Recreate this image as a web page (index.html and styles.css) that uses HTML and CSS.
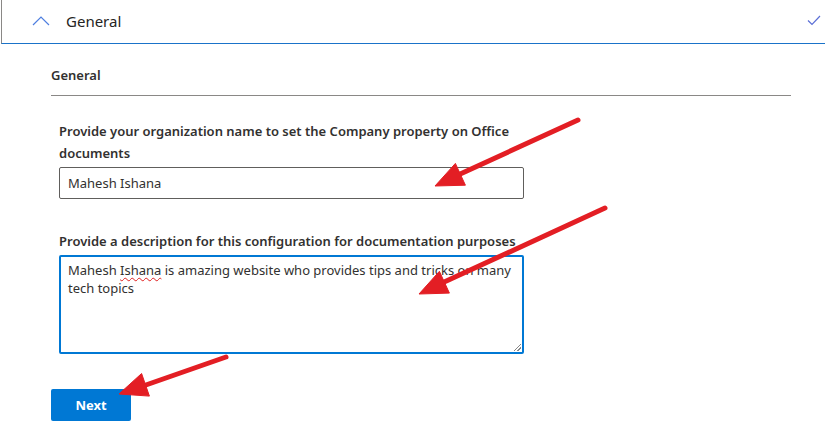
FILE: index.html
```html
<!DOCTYPE html>
<html lang="en">
<head>
<meta charset="utf-8">
<title>General</title>
<link rel="stylesheet" href="styles.css">
</head>
<body>
<div class="page">
  <div class="header">
    <svg class="chevron" width="18" height="10" viewBox="0 0 18 10"><polyline points="1,9 9,1 17,9" fill="none" stroke="#4f7fe0" stroke-width="1.2"/></svg>
    <span class="header-title">General</span>
    <svg class="check" width="14" height="11" viewBox="0 0 14 11"><polyline points="1,5.5 5,9.5 13,1" fill="none" stroke="#5b6fd6" stroke-width="1.2"/></svg>
  </div>
  <div class="content">
    <div class="section-title">General</div>
    <div class="divider"></div>
    <div class="form">
      <div class="field">
        <label class="label">Provide your organization name to set the Company property on Office documents</label>
        <div class="input">Mahesh Ishana</div>
      </div>
      <div class="field field-desc">
        <label class="label">Provide a description for this configuration for documentation purposes</label>
        <div class="textarea"><div class="line">Mahesh <span class="misspelled">Ishana</span> is amazing website who provides tips and tricks on many</div><div class="line">tech topics</div><span class="grip"></span></div>
      </div>
    </div>
    <button class="next">Next</button>
  </div>
  <svg class="arrows" width="825" height="423" viewBox="0 0 825 423">
    <g fill="#e31e24" stroke="#e31e24">
      <line x1="578" y1="120" x2="458" y2="175" stroke-width="5" stroke-linecap="round"/>
      <polygon points="435,186 465.4,185.2 455.4,163.4" stroke-width="1" stroke-linejoin="round"/>
      <line x1="605" y1="208" x2="442" y2="283" stroke-width="5" stroke-linecap="round"/>
      <polygon points="419,294 449.4,293.1 439.4,271.3" stroke-width="1" stroke-linejoin="round"/>
      <line x1="226" y1="357" x2="143" y2="386" stroke-width="5" stroke-linecap="round"/>
      <polygon points="119,394 149.4,396.1 141.6,373.5" stroke-width="1" stroke-linejoin="round"/>
    </g>
  </svg>
</div>
</body>
</html>
```
FILE: styles.css
```css
* { box-sizing: border-box; }
html, body { margin: 0; padding: 0; background: #fff; }
body {
  font-family: "Noto Sans", "Open Sans", sans-serif;
  color: #323130;
  width: 825px;
  height: 423px;
  overflow: hidden;
}
.page { position: relative; width: 825px; height: 423px; }
.header {
  margin-left: 1px;
  height: 44px;
  border-left: 1px solid #8a8886;
  border-bottom: 1px solid #1a73c9;
  display: flex;
  align-items: center;
}
.chevron { margin-left: 30px; margin-top: -2px; }
.header-title { margin-left: 16px; margin-top: -2px; font-size: 15px; color: #252423; }
.check { margin-left: auto; margin-right: 4px; margin-top: -2px; }
.content { padding: 0 34px 0 51px; }
.section-title {
  margin-top: 21px;
  font-size: 13px;
  line-height: 20px;
  font-weight: 600;
}
.divider { margin-top: 10px; height: 1px; background: #8a8886; }
.form { padding-left: 8px; width: 473px; }
.field { margin-top: 24px; }
.field-desc { margin-top: 31px; }
.label {
  display: block;
  font-size: 13px;
  line-height: 22px;
  font-weight: 600;
  color: #323130;
}
.input {
  margin-top: 3px;
  width: 465px;
  height: 32px;
  border: 1px solid #605e5c;
  border-radius: 2px;
  padding: 0 8px;
  font-size: 13px;
  line-height: 30px;
  color: #323130;
}
.textarea {
  position: relative;
  margin-top: 3px;
  width: 465px;
  height: 99px;
  border: 2px solid #0078d4;
  border-radius: 2px;
  padding: 4px 7px;
  font-size: 13px;
  line-height: 18px;
  color: #323130;
}
.line { white-space: nowrap; }
.misspelled { text-decoration: underline wavy #e02020; text-decoration-thickness: 1px; text-underline-offset: 2px; }
.grip {
  position: absolute;
  right: 1px;
  bottom: 1px;
  width: 7px;
  height: 7px;
  background: linear-gradient(135deg, transparent 45%, #888 45%, #888 55%, transparent 55%, transparent 70%, #888 70%, #888 80%, transparent 80%);
}
.next {
  display: block;
  margin-top: 35px;
  width: 80px;
  height: 32px;
  border: none;
  border-radius: 2px;
  background: #0078d4;
  color: #fff;
  font-family: "Noto Sans", "Open Sans", sans-serif;
  font-size: 13px;
  font-weight: 700;
}
.arrows { position: absolute; left: 0; top: 0; pointer-events: none; }
```
